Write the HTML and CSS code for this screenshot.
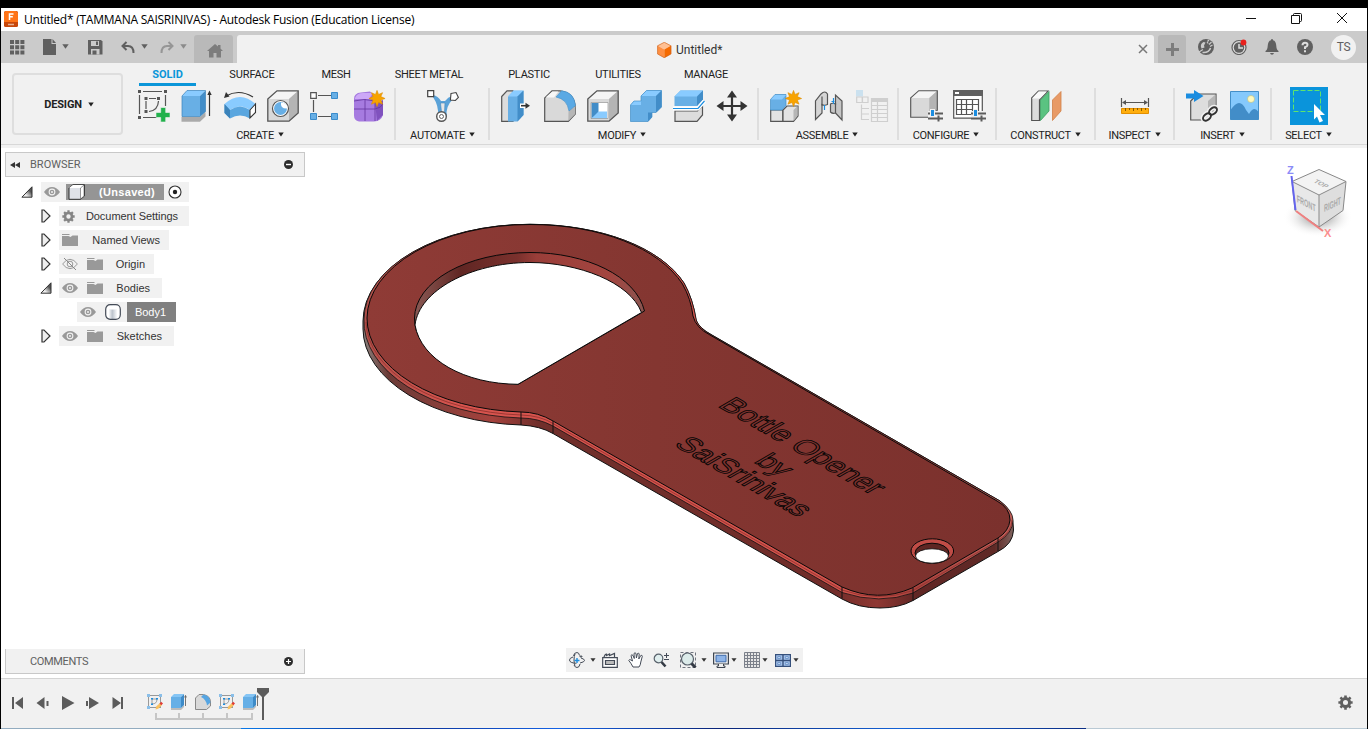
FILE: index.html
```html
<!DOCTYPE html>
<html lang="en">
<head>
<meta charset="utf-8">
<title>Untitled* - Autodesk Fusion</title>
<link rel="stylesheet" href="styles.css">
</head>
<body>
<svg class="defs" width="0" height="0">
  <defs>
    <linearGradient id="gFace" x1="0" y1="0" x2="1" y2="0"><stop offset="0" stop-color="#8f3b36"/><stop offset=".45" stop-color="#843631"/><stop offset="1" stop-color="#7b312d"/></linearGradient>
    <linearGradient id="gSide" gradientUnits="userSpaceOnUse" x1="362" y1="0" x2="1014" y2="0"><stop offset="0" stop-color="#8d8480"/><stop offset=".04" stop-color="#6b3b37"/><stop offset=".2" stop-color="#a5423d"/><stop offset=".27" stop-color="#702f2b"/><stop offset=".72" stop-color="#702c29"/><stop offset=".79" stop-color="#8f3833"/><stop offset=".85" stop-color="#602624"/><stop offset=".97" stop-color="#5f2926"/><stop offset="1" stop-color="#806560"/></linearGradient>
    <linearGradient id="gEdge" gradientUnits="userSpaceOnUse" x1="362" y1="0" x2="1014" y2="0"><stop offset="0" stop-color="#b0504a"/><stop offset=".15" stop-color="#d8544e"/><stop offset=".75" stop-color="#d0524b"/><stop offset=".85" stop-color="#a9423d"/><stop offset="1" stop-color="#c0605a"/></linearGradient>
    <linearGradient id="gWall" x1="0" y1="0" x2="1" y2="0"><stop offset="0" stop-color="#8a5a55"/><stop offset=".2" stop-color="#602623"/><stop offset=".45" stop-color="#7b312d"/><stop offset=".53" stop-color="#9a3e39"/><stop offset=".85" stop-color="#a34540"/><stop offset="1" stop-color="#8a5550"/></linearGradient>
    <linearGradient id="gTri" x1="0" y1="1" x2="1" y2="0"><stop offset=".3" stop-color="#eee"/><stop offset=".7" stop-color="#555"/></linearGradient>
    <linearGradient id="gCyl" x1="0" y1="0" x2="1" y2="0"><stop offset=".2" stop-color="#fff"/><stop offset=".45" stop-color="#bcc3cc"/><stop offset=".8" stop-color="#fff"/></linearGradient>
    <radialGradient id="gShadow"><stop offset=".3" stop-color="#bbb"/><stop offset="1" stop-color="#fff" stop-opacity="0"/></radialGradient>
    <symbol id="caret" viewBox="0 0 7 5"><path d="M.3.3h6.400L3.500 4.700z" fill="currentColor"/></symbol>
    <symbol id="eye" viewBox="0 0 16 12"><path d="M0 6Q3.500 .9 8 .9T16 6Q12.500 11.100 8 11.100T0 6z" fill="#999"/><circle cx="8" cy="6" r="3.400" fill="#f1f1f1"/><circle cx="8" cy="6" r="2.300" fill="#999"/><circle cx="8" cy="6" r="1" fill="#f1f1f1"/></symbol>
    <symbol id="folder" viewBox="0 0 16 12"><path d="M0 0h7.500v1H0zM0 2h6.500l2 1 2-1.500H16V12H0z" fill="#999"/></symbol>
    <symbol id="closed" viewBox="0 0 10 14"><path d="M1 1h2l6 6-6 6H1z" fill="#eee" stroke="#333" stroke-width="1.200"/></symbol>
    <symbol id="open" viewBox="0 0 12 12"><path d="M11 .8v10.400H.9z" fill="url(#gTri)" stroke="#333"/></symbol>
    <symbol id="gear" viewBox="0 0 16 16"><circle cx="8" cy="8" r="4.300" fill="none" stroke="currentColor" stroke-width="3.200"/><path d="M8 .4v3M8 12.600v3M.4 8h3M12.600 8h3M2.600 2.600l2 2M11.400 11.400l2 2M2.600 13.400l2-2M11.400 4.600l2-2" stroke="currentColor" stroke-width="2.800"/></symbol>
    <symbol id="tSketch" viewBox="0 0 16 16"><rect x="1.500" y="1.500" width="12" height="12" fill="none" stroke="#999"/><path d="M5 10V5h5q0 5-5 5" fill="none" stroke="#888" stroke-width=".8"/><path d="M0 0h3v3H0zM12 0h3v3h-3zM0 12h3v3H0z" fill="#8abfe9"/><path d="M4 4h2v1.500H4zM9 4h2v1.500H9zM4 9.500h2V11H4z" fill="#1b8de0"/><path d="M8.500 15.500l.7-3L13 9l2 2-3.800 3.800z" fill="#fbc15e"/><path d="M12.500 9.500l1.700-1.700L16 9.500l-1.700 1.700z" fill="#e13b35"/></symbol>
    <symbol id="tExtrude" viewBox="0 0 16 16"><path d="M0 14h10l3-3v2l-3 3H0z" fill="#bbb"/><path d="M0 3h10v11H0z" fill="#66afe6"/><path d="M0 3l3-3h10l-3 3z" fill="#85c5f5"/><path d="M10 3l3-3v11l-3 3z" fill="#3e8bc8"/><path d="M14.500 2v10M13.600 3.400l.9-2 .9 2" stroke="#666" stroke-width=".9" fill="none"/></symbol>
    <symbol id="tFillet" viewBox="0 0 16 16"><path d="M.5 15.500V4L4 .5h4.500Q15.500 2 15.500 8v4l-4 3.500z" fill="#d9d9d9" stroke="#888"/><path d="M6 3l2.500-2.500Q15 1.500 15.500 8.500l-3.500 3Q11 5 6 3z" fill="#56a5e2"/></symbol>
    <symbol id="cube" viewBox="0 0 32 32"><path d="M.8 9L10 .8h21.200V23L22 31.200H.8z" fill="#d9d9d9"/><path d="M.8 9L10 .8h21.200L22 9z" fill="#f5f5f5"/><path d="M31.200.8L22 9v22l9.200-8z" fill="#b4b4b4"/><path d="M.8 9L10 .8h21.200V23L22 31.200H.8z" fill="none" stroke="#555" stroke-width="1.300"/></symbol>
    <symbol id="sliders" viewBox="0 0 16 13"><path d="M1 2h15v11H1z" fill="#f1f1f1"/><path d="M1 4.500h15M1 9.500h15" stroke="#5c5c5c" stroke-width="2"/><path d="M11.500 6.500v6" stroke="#5c5c5c" stroke-width="2"/><path d="M3 0h5v7H3z" fill="#f1f1f1"/><path d="M4 1h3v6H4z" fill="#1b8de0"/></symbol>
    <symbol id="star" viewBox="0 0 18 18"><path d="M9 .4l1.700 4.300 4.200-1.900-1.800 4.200L17.600 9l-4.500 1.600 1.800 4.400-4.200-1.800L9 17.600l-1.600-4.400-4.300 1.800 1.700-4.400L.4 9l4.400-2-1.700-4.200 4.300 1.900z" fill="#f8a300" stroke="#dc8c00" stroke-width=".6"/></symbol>
  </defs>
</svg>

<div class="app">
  <header class="titlebar">
    <svg class="logo" width="15" height="16" viewBox="0 0 15 16"><rect width="14" height="16" rx="1.500" fill="#c8470a"/><path d="M1.500 0H12L14 2v9H0V2z" fill="#ff7417"/><path d="M5.500 9V3h4M5.500 5.800h3.300" stroke="#fff" stroke-width="1.500" fill="none"/><path d="M4 13.500h6" stroke="#e6b294" stroke-width="1.500"/></svg>
    <span class="app-title">Untitled* (TAMMANA SAISRINIVAS) - Autodesk Fusion (Education License)</span>
    <svg class="win" width="106" height="14" viewBox="0 0 106 14" fill="none" stroke="#111"><path d="M0 7.500h10"/><path d="M45.500 4.500h8v8h-8zM47.500 4.500v-1q0-1 1-1h6q1 0 1 1v6q0 1-1 1h-1"/><path d="M91 2l10 10M101 2L91 12"/></svg>
  </header>

  <div class="tabbar">
    <div class="quick">
      <svg class="q1" width="15" height="15" viewBox="0 0 15 15" fill="#606060"><path d="M0 0h4v4H0zM5.200 0h4v4h-4zM10.400 0h4v4h-4zM0 5.200h4v4H0zM5.200 5.200h4v4h-4zM10.400 5.200h4v4h-4zM0 10.400h4v4H0zM5.200 10.400h4v4h-4zM10.400 10.400h4v4h-4z"/></svg>
      <svg class="q2" width="14" height="16" viewBox="0 0 14 16" fill="#606060"><path d="M0 0h8.500v5H13v11H0z"/><path d="M9.500 0L13 4H9.500z"/></svg>
      <svg class="q3" width="7" height="5"><use href="#caret"/></svg>
      <svg class="q4" width="15" height="15" viewBox="0 0 15 15"><path d="M0 0h13l1.500 1.500V14.500H0z" fill="#606060"/><path d="M3 1h8v5H3zM3 9h8.500v5.500H3z" fill="#cbcbcb"/><path d="M8 1.500h2v3.500H8zM4.500 10.500h4v4h-4z" fill="#606060"/></svg>
      <svg class="q5" width="14" height="13" viewBox="0 0 14 13" fill="none" stroke="#606060" stroke-width="2"><path d="M5.500 1L1.500 5l4 4M1.500 5H7q5.500 0 5.500 7"/></svg>
      <svg class="q6" width="7" height="5"><use href="#caret"/></svg>
      <svg class="q7" width="14" height="13" viewBox="0 0 14 13" fill="none" stroke="#969696" stroke-width="2"><path d="M8.500 1l4 4-4 4M12.500 5H7Q1.500 5 1.500 12"/></svg>
      <svg class="q8" width="7" height="5"><use href="#caret"/></svg>
    </div>
    <div class="home"><svg width="16" height="14" viewBox="0 0 16 14" fill="#7d7d7d"><path d="M8 0l3 2.500V1h2.500v3.500L16 7h-2v6.500H9.500V9h-3v4.500H2V7H0z"/></svg></div>
    <div class="doc">
      <svg width="15" height="16" viewBox="0 0 15 16"><path d="M7.300 0l6.900 3.600-6.900 4L.4 3.600z" fill="#ffc093"/><path d="M.4 3.600l6.900 4V16L.4 12z" fill="#ff8f42"/><path d="M14.200 3.600l-6.900 4V16l6.900-4z" fill="#f56a00"/><path d="M7.300.3l6.600 3.500V12l-6.600 3.700L.6 12V3.800z" fill="none" stroke="#c96320" stroke-width=".6"/></svg>
      <span>Untitled*</span>
      <svg class="close" width="10" height="10" viewBox="0 0 10 10" stroke="#777" stroke-width="1.500"><path d="M1 1l8 8M9 1L1 9"/></svg>
    </div>
    <div class="plus"><svg width="13" height="13" viewBox="0 0 13 13" stroke="#7d7d7d" stroke-width="3"><path d="M6.500 0v13M0 6.500h13"/></svg></div>
    <div class="status">
      <svg width="16" height="16" viewBox="0 0 16 16"><circle cx="8" cy="8" r="8" fill="#606060"/><path d="M3.500 9.500Q1.500 5 5.500 3l2 .5L6 6.500l.5 2z" fill="#cbcbcb"/><path d="M9 3l1.200 1.500M11 5.500l2.500-2.500M12 7.500l2.500-1.500M9.500 2.500l1.500-1.500" stroke="#cbcbcb" stroke-width="1.200"/><path d="M4.500 13.500Q11 14 12.500 9" fill="none" stroke="#cbcbcb" stroke-width="1.600"/><path d="M1 13l4-2.500" stroke="#cbcbcb" stroke-width="1.200"/></svg>
      <svg width="16" height="16" viewBox="0 0 16 16"><circle cx="8" cy="8.500" r="7" fill="#ddd" stroke="#606060" stroke-width="1.200"/><circle cx="8" cy="8.500" r="5.200" fill="#606060"/><path d="M8 5v4h4" stroke="#ddd" fill="none" stroke-width="1.500"/><circle cx="12.500" cy="3.500" r="2.900" fill="#e8211d"/></svg>
      <svg width="16" height="16" viewBox="0 0 16 16" fill="#606060"><path d="M8 0q1 0 1 1.300Q12 2 12.300 7q.2 4 2.200 5v1h-13v-1q2-1 2.200-5Q4 2 7 1.300 7 0 8 0zM6 14h4q-.5 1.800-2 1.800T6 14z"/></svg>
      <svg width="16" height="16" viewBox="0 0 16 16"><circle cx="8" cy="8" r="8" fill="#606060"/><path d="M5.500 6.300Q5.500 3.800 8 3.800t2.500 2.200Q10.500 7.400 8 8.300V10" fill="none" stroke="#ddd" stroke-width="2"/><path d="M7 11.300h2v2H7z" fill="#ddd"/></svg>
      <span class="avatar">TS</span>
    </div>
  </div>

  <div class="ribbon">
    <div class="workspace">DESIGN <svg width="6" height="5"><use href="#caret"/></svg></div>
    <div class="toolarea">
      <nav class="modes"><b>SOLID</b><span>SURFACE</span><span>MESH</span><span>SHEET METAL</span><span>PLASTIC</span><span>UTILITIES</span><span>MANAGE</span></nav>
      <div class="groups">
        <section class="g-create">
          <div class="icons">
            <svg width="32" height="32" viewBox="0 0 32 32"><path d="M5 1.500h19M5 27.500h14M1.500 5v19M27.500 5v11M8 19V11M11 8.500h7" fill="none" stroke="#555" stroke-width="1.200"/><path d="M20.500 11Q20 20.500 11 21.500" fill="none" stroke="#555" stroke-width="1.200"/><path d="M0 0h3v3H0zM26 0h3v3h-3zM0 26h3v3H0zM6.500 7h3v3h-3zM19 7h3v3h-3zM6.500 20h3v3h-3z" fill="#555"/><path d="M22.700 17.500h5v5H32v5h-4.300V32h-5v-4.500H18v-5h4.700z" fill="#22b14c" stroke="#f1f1f1" stroke-width=".6"/></svg>
            <svg width="32" height="32" viewBox="0 0 32 32"><path d="M.5 27H19l5.500-5v4.500L19 31.700H.5z" fill="#aaa"/><path d="M1 6h18v20.500H1z" fill="#68afe5"/><path d="M1 6l5-5.500h18.500L19 6z" fill="#89cbff"/><path d="M19 6l5.500-5.500v21L19 26.500z" fill="#428dc8"/><path d="M1 6l5-5.500h18.500v21l-5.500 5H1z" fill="none" stroke="#3b83ba" stroke-width=".7"/><path d="M28.500 26V3" stroke="#333" stroke-width="1.200"/><path d="M26.300 5L28.500.5l2.200 4.500z" fill="#333"/></svg>
            <svg width="32" height="32" viewBox="0 0 32 32"><path d="M2 6Q15-1.500 29 7" fill="none" stroke="#333" stroke-width="1.200"/><path d="M0 8l2-6 3.500 4.500z" fill="#333"/><path d="M.5 14Q16 0 31.500 14L26 20q-9-7-20 0z" fill="#89cbff"/><path d="M.5 14L6 20q10-7 20 0v8.500q-10-6-20 0L.5 23z" fill="#5aa6df"/><path d="M.5 14L6 20v8.500L.5 23z" fill="#3b83ba"/><path d="M26 20l5.500-6v8.500L26 28z" fill="#fff" stroke="#333" stroke-width="1.100"/></svg>
            <svg width="32" height="32" viewBox="0 0 32 32"><use href="#cube"/><circle cx="13.500" cy="18.500" r="8" fill="#fff" stroke="#555" stroke-width="1.200"/><circle cx="13.500" cy="18.500" r="6.500" fill="#68afe5"/><path d="M14 12.500q-1 6.500 6.500 6Q20 13 14 12.500z" fill="#fff"/></svg>
            <svg width="32" height="32" viewBox="0 0 32 32"><path d="M8 5.500h13M8 26.500h13M3.500 10v12" stroke="#555" stroke-width="1.200"/><path d="M.7 2.700h5.600v5.600H.7z" fill="#fff" stroke="#555" stroke-width="1.200"/><path d="M21.500 2.500h6v6h-6zM.5 23.500h6v6h-6zM21.500 23.500h6v6h-6z" fill="#68afe5" stroke="#3b8ccc"/></svg>
            <svg width="32" height="32" viewBox="0 0 32 32"><path d="M1 9q0-6 7-6.500l9-1L30 14v11q-2 6-9 6.500H6q-5-1-5-6z" fill="#a67be0"/><path d="M2 8q2-5 8-5h10l-4 6H2z" fill="#cda8f7"/><path d="M22 13l8-3v15l-6 6z" fill="#8052be"/><path d="M1 19h21q6-1 8-5M12 9v22M1 11q10-3 21 0v20" fill="none" stroke="#65369f" stroke-width=".8"/><use href="#star" x="15.500" y="0" width="17" height="17"/></svg>
          </div>
          <div class="label">CREATE <svg width="6" height="5"><use href="#caret"/></svg></div>
        </section>
        <section class="g-automate">
          <div class="icons"><svg width="32" height="32" viewBox="0 0 32 32"><path d="M6 5q5 1 8 6h4q3-4 7-5L26 9q-8 8-6 17h-9Q12 16 6 7z" fill="#5aa2d8"/><path d="M13.500 13h4.500l-.5 9h-3z" fill="#e6e6e6" stroke="#3f86bd" stroke-width=".6"/><path d="M.7.7h6v6h-6z" fill="#fff" stroke="#444" stroke-width="1.200"/><path d="M24 3.500l5-1 2.400 5-3 3-5-.5z" fill="#fff" stroke="#444" stroke-width="1.100"/><circle cx="14.500" cy="26.500" r="4.800" fill="#fff" stroke="#555" stroke-width="1.400"/><circle cx="14.500" cy="26.500" r="2" fill="none" stroke="#666"/></svg></div>
          <div class="label">AUTOMATE <svg width="6" height="5"><use href="#caret"/></svg></div>
        </section>
        <section class="g-modify">
          <div class="icons">
            <svg width="32" height="32" viewBox="0 0 32 32"><path d="M.7 6.500L6 .8h6v30.500H.7z" fill="#ddd" stroke="#555" stroke-width="1.200"/><path d="M7 6.500L12.500.8h10V25l-6 6.500H7z" fill="#68afe5"/><path d="M7 6.500L12.500.5h10l-6 6z" fill="#89cbff"/><path d="M16.500 6.500l6-6V25l-6 6.500z" fill="#428dc8"/><path d="M19 13.500h6v4.500h-6z" fill="#fff"/><path d="M20 15.700h5" stroke="#333" stroke-width="1.600"/><path d="M24.500 12.700l4.500 3-4.500 3z" fill="#333"/></svg>
            <svg width="32" height="32" viewBox="0 0 32 32"><path d="M.7 31.300V8L8 .8h8Q31 3 31.300 18v6l-7 7.300z" fill="#d9d9d9" stroke="#555" stroke-width="1.200"/><path d="M1.500 7.500l6.800-6h6L10 7.500z" fill="#f7f7f7"/><path d="M24.500 21l6.800-5v8l-7 7z" fill="#b6b6b6"/><path d="M12 7L17.500.8Q30 2 31.500 15.500L25 21Q23 9 12 7z" fill="#5aa9e4" stroke="#438fc8" stroke-width=".6"/></svg>
            <svg width="32" height="32" viewBox="0 0 32 32"><use href="#cube"/><path d="M4 12.500h17v16H4z" fill="#fff"/><path d="M4.500 13h7v10l-7 5.500z" fill="#428dc8"/><path d="M4.500 28.500l7-7H20v7z" fill="#89cbff"/><path d="M4 12.500h17v16H4z" fill="none" stroke="#888" stroke-width=".6"/></svg>
            <svg width="32" height="32" viewBox="0 0 32 32"><path d="M.5 15l3.500-4h7V6l5.500-5.500h15V17L26 22.500h-4V27l-4 4.500H.5z" fill="#68afe5"/><path d="M11 6L16.500.5h15L26 6zM.5 15L4 11h7v4z" fill="#89cbff"/><path d="M26 6l5.500-5.500V17L26 22.500zM18 22.500h4V27l-4 4.500z" fill="#428dc8"/><path d="M.5 15l3.500-4h7V6l5.500-5.500h15V17L26 22.500h-4V27l-4 4.500H.5z" fill="none" stroke="#438fc8" stroke-width=".7"/></svg>
            <svg width="32" height="32" viewBox="0 0 32 32"><path d="M1.500 6.500L7.500.5h22.500v9l-6 6.500H1.500z" fill="#68afe5"/><path d="M1.500 6.500L7.500.5h22.500l-6 6z" fill="#89cbff"/><path d="M24 6.500l6-6v9l-6 6.500z" fill="#428dc8"/><path d="M2 21h22.500l5-5v9L24 31.300H2z" fill="#ddd" stroke="#555" stroke-width="1.200"/><path d="M0 18.500h25l6.500-7.500" stroke="#fff" stroke-width="4" fill="none"/><path d="M0 18.500h25l6.500-7.500" stroke="#1b8de0" stroke-width="1.200" fill="none"/></svg>
            <svg width="32" height="32" viewBox="0 0 32 32"><path d="M16 4v24M4 16h24" stroke="#333" stroke-width="2.200"/><path d="M16 .5l5 7H11zM16 31.500l5-7H11zM.5 16l7-5v10zM31.500 16l-7-5v10z" fill="#333"/></svg>
          </div>
          <div class="label">MODIFY <svg width="6" height="5"><use href="#caret"/></svg></div>
        </section>
        <section class="g-assemble">
          <div class="icons">
            <svg width="32" height="32" viewBox="0 0 32 32"><path d="M.7 20h12v11.300H.7zM13 20l4-4h11v10l-4.500 5.300H13z" fill="#e3e3e3" stroke="#555" stroke-width="1.200"/><path d="M23.500 20l4-4v10l-4 5z" fill="#b6b6b6"/><path d="M.5 9.500L5 4.500h11v11L12 20H.5z" fill="#68afe5" stroke="#438fc8" stroke-width=".7"/><path d="M1 9.500L5 5h11l-4 4.500z" fill="#89cbff"/><use href="#star" x="15" y="0" width="17" height="17"/></svg>
            <svg width="32" height="32" viewBox="0 0 32 32" stroke="#555" stroke-width="1.200"><path d="M2.500 29.500V11L8 4q4-4 6.500 0v10.500q-3 1.500-5.500 0V23z" fill="#d5d5d5"/><path d="M9 6.500v9" fill="none"/><path d="M29 30V11L22.500 5v9q-3-1.500-5 0v8q2 2 5 1z" fill="#c6c6c6"/><path d="M22.500 13v10" fill="none"/><path d="M11.500 15v5M20.500 8v6M18.500 11.500h3" stroke="#1b8de0"/></svg>
            <svg width="32" height="32" viewBox="0 0 32 32" fill="none" stroke="#cfcfcf" stroke-width="1.200"><path d="M0 0h7v6.500H0z" fill="#cbe1ef" stroke="none"/><path d="M.7 7h5.500v5.500H.7zM6.500 7H12v5.500H6.500zM5.500 14.500v15.500M5.500 18.500H13M5.500 24H13M5.500 29.500H13M15.500 8.500h16v23h-16zM15.500 15.500h16M15.500 19.500h16M15.500 23.500h16M15.500 27.500h16M21.500 12v19"/><path d="M15 8h17v4H15z" fill="#cfcfcf" stroke="none"/></svg>
          </div>
          <div class="label">ASSEMBLE <svg width="6" height="5"><use href="#caret"/></svg></div>
        </section>
        <section class="g-configure">
          <div class="icons">
            <svg width="32" height="32" viewBox="0 0 32 32"><use href="#cube" width="28" height="28"/><use href="#sliders" x="17" y="19" width="16" height="13"/></svg>
            <svg width="32" height="32" viewBox="0 0 32 32"><path d="M.7 1.700h28.600v26.500H.7z" fill="#fff" stroke="#555" stroke-width="1.200"/><path d="M0 0h30v6H0z" fill="#606060"/><path d="M2 2h4v2H2z" fill="#fff"/><path d="M3.500 9.500h22v15h-22zM3.500 14.500h22M3.500 19.500h22M8.500 9.500v15M13.500 9.500v15M19.500 9.500v15" fill="none" stroke="#555" stroke-width="1.200"/><use href="#sliders" x="17" y="19" width="16" height="13"/></svg>
          </div>
          <div class="label">CONFIGURE <svg width="6" height="5"><use href="#caret"/></svg></div>
        </section>
        <section class="g-construct">
          <div class="icons"><svg width="32" height="32" viewBox="0 0 32 32"><path d="M1.700 8L8.500 1H18L9.500 10v20.500H1.700z" fill="#ddd" stroke="#555" stroke-width="1.200"/><path d="M2 8.500L8.500 1.500H17l-7 7z" fill="#fafafa"/><path d="M10.500 10l8.500-8.500V21l-8.500 9.500z" fill="#5ac381" stroke="#3a9d60" stroke-width=".8"/><path d="M22.500 10L31 1.500V21l-8.500 9.500z" fill="#e89a66" stroke="#d28048" stroke-width=".8"/></svg></div>
          <div class="label">CONSTRUCT <svg width="6" height="5"><use href="#caret"/></svg></div>
        </section>
        <section class="g-inspect">
          <div class="icons"><svg width="32" height="32" viewBox="0 0 32 32"><path d="M2.500 8v9M29.500 8v9M4 12.500h24" stroke="#555" stroke-width="1.200"/><path d="M3 12.500l4-2.500v5zM29 12.500l-4-2.500v5z" fill="#555"/><path d="M2.500 18.500h27v5h-27z" fill="#ffae0d" stroke="#e38f00"/><path d="M6.500 18v3M10.500 18v2M14.500 18v3M18.500 18v2M22.500 18v3M26.500 18v2" stroke="#8c5b00"/></svg></div>
          <div class="label">INSPECT <svg width="6" height="5"><use href="#caret"/></svg></div>
        </section>
        <section class="g-insert">
          <div class="icons">
            <svg width="32" height="32" viewBox="0 0 32 32"><path d="M4.700 11l7-7H30v19l-8 7H4.700z" fill="#ddd" stroke="#555" stroke-width="1.200"/><path d="M22 11l7.500-6.500V23L22 29.500z" fill="#b6b6b6"/><path d="M0 3.500h8V0l9.500 6L8 12V8.500H0z" fill="#1b8de0"/><g fill="none" stroke="#f1f1f1" stroke-width="5"><ellipse cx="21" cy="27" rx="4.500" ry="3" transform="rotate(-40 21 27)"/><ellipse cx="27" cy="21" rx="4.500" ry="3" transform="rotate(-40 27 21)"/></g><g fill="none" stroke="#333" stroke-width="2"><ellipse cx="21" cy="27" rx="4.500" ry="3" transform="rotate(-40 21 27)"/><ellipse cx="27" cy="21" rx="4.500" ry="3" transform="rotate(-40 27 21)"/></g></svg>
            <svg width="32" height="32" viewBox="0 0 32 32"><path d="M1.500 1.500h28v28h-28z" fill="#85c9fc" stroke="#438fc8"/><path d="M1.500 20q5-7 8.500-7 4 0 7 7l3 4q5-9 9.500-2v7.500h-28z" fill="#428dc8"/><circle cx="22" cy="9" r="3.500" fill="#fff9bd" stroke="#b5bb80" stroke-width=".6"/></svg>
          </div>
          <div class="label">INSERT <svg width="6" height="5"><use href="#caret"/></svg></div>
        </section>
        <section class="g-select">
          <div class="icons"><svg width="38" height="38" viewBox="0 0 38 38"><path d="M0 0h38v38H0z" fill="#0a94db"/><path d="M3.500 3.500h27v21h-27z" fill="none" stroke="#5fe46c" stroke-dasharray="5 2"/><path d="M24 17l11 11h-5l3 6-3.500 1.500-2.500-6-3 3z" fill="#fff"/></svg></div>
          <div class="label">SELECT <svg width="6" height="5"><use href="#caret"/></svg></div>
        </section>
      </div>
    </div>
  </div>

  <main class="viewport">
    <svg class="scene" width="1366" height="530" viewBox="1 148 1366 530">
      <!-- side walls -->
      <path d="M363 321A167 97 0 0 1 530 224.300C602 224.500 661 248 684 283Q693 299 696 320Q699 328 712 335L1000 501Q1014 511 1013.500 530Q1013 544 998 551.500L913 600.500Q899 608 880 608Q858 608 842 599L553 433.500Q540 426 521 425A167 96.500 0 0 1 363 329z" fill="url(#gSide)" stroke="#111"/>
      <!-- rounded edge -->
      <path d="M364 319A166 95 0 0 1 530 224.300C602 224.500 661 248 684 283Q693 299 696.500 321Q700 329 711.500 335L1000 501Q1013 511 1013 520Q1013 533 998 542L913 593Q880 605 842 592.500L553 426Q538 418 521 418A167 96.500 0 0 1 364 319z" fill="url(#gEdge)" stroke="#111" stroke-width=".8"/>
      <path d="M366 322A165 95 0 0 0 521 415Q540 415.500 553 423.500L842 590Q878 603 913 590.500L998 540.500Q1012 532 1012 520" fill="none" stroke="#8c302c" stroke-width=".8"/>
      <!-- top face -->
      <path d="M367 318A163 94 0 0 1 530 224.500C600 224.500 659 248 682.500 284Q691 299 693 316Q696 328 710 335L997 501Q1010 508 1010 520Q1009 531 998 538L912 588Q878 603 842 587L553 421Q538 412 521 412A163 94 0 0 1 367 318z" fill="url(#gFace)" stroke="#080808"/>
      <!-- opening -->
      <path d="M644.500 311C636 276 586 252.500 530 252.500A115.500 66 0 0 0 414.500 318A115.500 66 0 0 0 518 384.300z" fill="url(#gWall)" stroke="#080808"/>
      <path d="M641.500 312.500C630 282 578 262.500 530 262.500C470 262.500 419 291 415 325C421 360 465 384 518 384.300z" fill="#fff" stroke="#080808"/>
      <path d="M521 412v13M553 421v12.500M842 587v11.500M913 588v12.500M998 538v13" stroke="#111"/>
      <!-- key ring hole -->
      <ellipse cx="932.300" cy="551" rx="21.300" ry="12.200" fill="#c04c46" stroke="#080808"/>
      <ellipse cx="932" cy="553" rx="17" ry="9.800" fill="#5e2623" stroke="#080808"/>
      <ellipse cx="932" cy="556" rx="16.500" ry="7.200" fill="#fff" stroke="#080808" stroke-width=".8"/>
      <g class="engraving">
        <text transform="matrix(.866 .5 -.866 .5 717 406)">Bottle Opener</text>
        <text transform="matrix(.866 .5 -.866 .5 753 462)">by</text>
        <text transform="matrix(.866 .5 -.866 .5 673 445)">SaiSrinivas</text>
      </g>
      <!-- view cube -->
      <ellipse cx="1318" cy="217" rx="35" ry="20" fill="url(#gShadow)"/>
      <path d="M1319 169.500l27 12-27 13.500-27-13.500z" fill="#f3f3f3"/><path d="M1292 181.500l27 13.500v32l-24-16.500z" fill="#e8e8e8"/><path d="M1346 181.500l-27 13.500v32l24-16.500z" fill="#dedede"/>
      <path d="M1319 169.500l27 12-27 13.500-27-13.500zM1292 181.500l3 29 24 16.500 24-16.500 3-29M1319 195v32" fill="none" stroke="#888"/>
      <path d="M1291.500 176l4 34" stroke="#6464ee" stroke-width="2"/><path d="M1296 211l27 20" stroke="#f08080" stroke-width="2"/>
      <text class="axis" x="1287" y="174" fill="#8b8bf7">Z</text><text class="axis" x="1324" y="237" fill="#fb8e8e">X</text>
      <text class="cubetext" transform="matrix(.78 .38 -.7 .5 1313 182)">TOP</text>
      <text class="cubetext" transform="matrix(.68 .36 .06 1.300 1297 202)">FRONT</text>
      <text class="cubetext" transform="matrix(.68 -.32 0 1.300 1324 212)">RIGHT</text>
    </svg>

    <aside class="browser">
      <div class="panel-head"><svg width="10" height="6" viewBox="0 0 10 6"><path d="M5 0v6L0 3zM10 0v6L5 3z" fill="#333"/></svg><span>BROWSER</span><svg class="toggle" width="9" height="9" viewBox="0 0 9 9"><circle cx="4.500" cy="4.500" r="4.500" fill="#2d2d2d"/><path d="M2 4.500h5" stroke="#fff" stroke-width="1.400"/></svg></div>
      <ul class="tree">
        <li class="root"><svg class="tw" width="12" height="12"><use href="#open"/></svg><div class="row w148"><svg width="16" height="12"><use href="#eye"/></svg><div class="docname"><svg width="18" height="16" viewBox="0 0 18 16"><path d="M1 4L5 .7h11.500V12L12.500 15.300H1z" fill="#dfe2e8" stroke="#333"/><path d="M1 4L5 1h11l-3.500 3z" fill="#fff"/><path d="M12.500 4l3.500-3v11l-3.500 3z" fill="#fff" stroke="#555" stroke-width=".6"/></svg><b>(Unsaved)</b></div><svg width="14" height="14" viewBox="0 0 14 14"><circle cx="7" cy="7" r="6" fill="#fff" stroke="#333" stroke-width="1.100"/><circle cx="7" cy="7" r="2.200" fill="#222"/></svg></div></li>
        <li><svg class="tw" width="10" height="14"><use href="#closed"/></svg><div class="row w130"><svg class="cog" width="13" height="13"><use href="#gear"/></svg><span>Document Settings</span></div></li>
        <li><svg class="tw" width="10" height="14"><use href="#closed"/></svg><div class="row w110"><svg width="16" height="12"><use href="#folder"/></svg><span>Named Views</span></div></li>
        <li><svg class="tw" width="10" height="14"><use href="#closed"/></svg><div class="row w95"><svg width="16" height="12" viewBox="0 0 16 12"><path d="M.6 6Q4 1.300 8 1.300T15.400 6Q12 10.700 8 10.700T.6 6z" fill="none" stroke="#999"/><circle cx="8" cy="6" r="2.800" fill="none" stroke="#999"/><path d="M2 0l12 12" stroke="#888"/></svg><svg class="f2" width="16" height="12"><use href="#folder"/></svg><span>Origin</span></div></li>
        <li><svg class="tw" width="12" height="12"><use href="#open"/></svg><div class="row w103"><svg width="16" height="12"><use href="#eye"/></svg><svg class="f2" width="16" height="12"><use href="#folder"/></svg><span>Bodies</span></div></li>
        <li class="leaf"><div class="row w99"><svg width="16" height="12"><use href="#eye"/></svg><svg class="f2" width="16" height="16" viewBox="0 0 16 16"><rect x=".7" y=".7" width="14.600" height="14.600" rx="4.500" fill="url(#gCyl)" stroke="#444b57" stroke-width="1.200"/><ellipse cx="8" cy="3.500" rx="5.500" ry="2" fill="#fff"/></svg><strong>Body1</strong></div></li>
        <li><svg class="tw" width="10" height="14"><use href="#closed"/></svg><div class="row w115"><svg width="16" height="12"><use href="#eye"/></svg><svg class="f2" width="16" height="12"><use href="#folder"/></svg><span>Sketches</span></div></li>
      </ul>
    </aside>

    <div class="comments panel-head"><span>COMMENTS</span><svg class="toggle" width="9" height="9" viewBox="0 0 9 9"><circle cx="4.500" cy="4.500" r="4.500" fill="#2d2d2d"/><path d="M2 4.500h5M4.500 2v5" stroke="#fff" stroke-width="1.200"/></svg></div>

    <div class="navbar">
      <svg class="n1" width="16" height="16" viewBox="0 0 16 16" fill="none" stroke="#444b57"><path d="M4.500 4Q5 .5 8 .5q2 0 2.500 3M5 13q1 2.500 3 2.500 2.500 0 3-3.500M4 5Q.5 6 .5 8q0 3 7 3.300M12 6q3.500 1 3.500 2.500T11 11M6 2Q5 4 5 8t1 5.500"/><path d="M8 6v5M5.500 8.500h5" stroke="#1b8de0" stroke-width="1.400"/><path d="M12 3v3M10.500 4.500h3" stroke-width=".8"/></svg>
      <svg class="c1" width="6" height="4"><use href="#caret"/></svg>
      <svg class="n2" width="16" height="16" viewBox="0 0 16 16" fill="none" stroke="#444b57" stroke-width="1.200"><path d="M.7 5.700h14.600v9.600H.7z" fill="#fff"/><path d="M3.500 8.500h9v4h-9z" fill="#bbb"/><path d="M2 5q1-3 2.500-3v1.500l3-1.500v1.500l5-2V5"/></svg>
      <svg class="n3" width="16" height="16" viewBox="0 0 16 16"><path d="M5 15Q3 11 .8 8.500q.4-1.500 2-.6L4.500 9 3 3.500q.8-1.500 2 0L6.300 6.500 6 1.500q1-1.500 2 0L8.400 6 9.500 1.500q1.300-1 1.700.5L10.800 7l2-3.500q1.300-.8 1.500.8L12.800 10q-.2 3-1.800 5z" fill="#fff" stroke="#444b57"/></svg>
      <svg class="n4" width="17" height="16" viewBox="0 0 17 16" fill="none"><circle cx="5.500" cy="6.500" r="4.300" fill="#e0eeee" stroke="#58616b" stroke-width="1.200"/><path d="M8.500 10l4 4.500" stroke="#333a44" stroke-width="2.600"/><path d="M13.500 1v5M11 3.500h5M11 7.500h5" stroke="#444b57"/></svg>
      <svg class="n5" width="17" height="16" viewBox="0 0 17 16" fill="none"><path d="M.5.500h15v15H.5z" stroke="#70757f" stroke-dasharray="3 2"/><circle cx="7.500" cy="7" r="6" fill="#dcebea" stroke="#58616b" stroke-width="1.200"/><path d="M11.500 11.500l4 4" stroke="#333a44" stroke-width="3"/></svg>
      <svg class="c2" width="6" height="4"><use href="#caret"/></svg>
      <svg class="n6" width="16" height="16" viewBox="0 0 16 16"><path d="M.6 1h14.800v11H.6z" fill="#eee" stroke="#3f4651" stroke-width="1.200"/><path d="M3 3.300h10v6.500H3z" fill="#8db4e8" stroke="#3f6bab"/><path d="M5.500 12v2H4v1.500h8V14h-1.500v-2" fill="#eee" stroke="#3f4651"/></svg>
      <svg class="c3" width="6" height="4"><use href="#caret"/></svg>
      <svg class="n7" width="16" height="16" viewBox="0 0 16 16" fill="#e6e6e6" stroke="#7b808a"><path d="M.5.500h15v15H.5zM3.500 0v16M6.500 0v16M9.500 0v16M12.500 0v16M0 3.500h16M0 6.500h16M0 9.500h16M0 12.500h16"/></svg>
      <svg class="c3" width="6" height="4"><use href="#caret"/></svg>
      <svg class="n8" width="16" height="13" viewBox="0 0 16 13"><path d="M.6.600h14.800v11.800H.6z" fill="#a9c6ee" stroke="#35507c" stroke-width="1.200"/><path d="M8 0v13M0 6.500h16" stroke="#35507c" stroke-width="1.400"/><path d="M2.700 2.600h3v2h-3zM10.300 2.600h3v2h-3zM2.700 8.600h3v2h-3zM10.300 8.600h3v2h-3z" fill="#c7dbf6" stroke="#6f95c9"/></svg>
      <svg class="c3" width="6" height="4"><use href="#caret"/></svg>
    </div>
  </main>

  <footer class="timeline">
    <svg class="play" width="112" height="14" viewBox="0 0 112 14" fill="#5c5c5c"><path d="M0 1h2v12H0zM11 1v12L3 7zM32.500 1v12L24.500 7zM34.500 5h2v5h-2zM50 0l12.500 7L50 14zM74 5h2v5h-2zM77 1v12l10-6zM100.500 1v12L109 7zM109 1h2v12h-2z"/></svg>
    <div class="features">
      <div class="ops">
        <svg width="16" height="16"><use href="#tSketch"/></svg><svg width="16" height="16"><use href="#tExtrude"/></svg><svg width="16" height="16"><use href="#tFillet"/></svg><svg width="16" height="16"><use href="#tSketch"/></svg><svg width="16" height="16"><use href="#tExtrude"/></svg>
      </div>
      <svg class="bracket" width="98" height="7" viewBox="0 0 98 7" fill="none" stroke="#c6c6c6" stroke-width="2"><path d="M1 0v6h96V0M24 0v6M48 0v6M72 0v6"/></svg>
    </div>
    <svg class="marker" width="12" height="32" viewBox="0 0 12 32" fill="#5c5c5c"><path d="M0 0h12v4L7 9v23H5V9L0 4z"/></svg>
    <svg class="settings" width="15" height="15"><use href="#gear"/></svg>
  </footer>
  <div class="taskbar"></div>
</div>
</body>
</html>
```
FILE: styles.css
```css
* { box-sizing: border-box; }
body { margin: 0; background: #000; overflow: hidden; font-family: "Liberation Sans", Arial, sans-serif; font-size: 11px; color: #333; }
svg { display: block; flex: none; }
.defs { position: absolute; }
.app { width: 1368px; height: 729px; display: flex; flex-direction: column; border: 1px solid #000; border-top-width: 8px; border-bottom: 0; background: #f1f1f1; }

.titlebar { height: 23px; display: flex; align-items: center; background: #fff; padding: 0 15px 0 3px; }
.logo { margin-bottom: 2px; }
.app-title { margin-left: 5px; flex: 1; font: 12px/20px "Open Sans", sans-serif; letter-spacing: -.235px; color: #000; white-space: nowrap; }
.win { margin-bottom: 4px; }

.tabbar { height: 32px; display: flex; align-items: flex-end; background: #cbcbcb; color: #606060; }
.quick { width: 193px; height: 32px; display: flex; align-items: center; padding-left: 9px; }
.q2 { margin-left: 18px; }
.q3 { margin: 0 0 2px 5px; }
.q4 { margin-left: 19px; }
.q5 { margin: 1px 0 0 18px; }
.q6 { margin: 0 0 2px 6px; }
.q7 { margin: 1px 0 0 12px; }
.q8 { margin: 0 0 2px 6px; color: #8b8b8b; }
.home { width: 39px; height: 28px; display: grid; place-items: center; padding: 3px 0 0 2px; background: #b9b9b9; border-radius: 3px 3px 0 0; }
.doc { width: 917px; height: 28px; margin-left: 4px; display: flex; align-items: center; padding: 1px 6px 0 420px; background: #f1f1f1; border-radius: 3px 3px 0 0; font: 12px/20px Roboto, sans-serif; color: #333; }
.doc span { margin-left: 4px; flex: 1; }
.close { margin-bottom: 2px; }
.plus { width: 28px; height: 28px; margin-left: 4px; display: grid; place-items: center; background: #b9b9b9; border-radius: 3px 3px 0 0; }
.status { flex: 1; height: 32px; display: flex; align-items: center; gap: 17px; padding-left: 12px; }
.avatar { width: 25px; height: 25px; margin-left: 1px; border-radius: 50%; background: #f1f1f1; display: grid; place-items: center; font: 12px Roboto, sans-serif; letter-spacing: -.4px; color: #606060; }

.ribbon { height: 85px; display: flex; border-bottom: 3px solid #f1f1f1; box-shadow: inset 0 -1px #d8d8d8; }
.workspace { width: 111px; height: 62px; margin: 10px 6px 0 11px; border: 2px solid #dedede; border-radius: 4px; display: flex; align-items: center; justify-content: center; gap: 6px; padding-left: 3px; font: bold 11px Roboto, sans-serif; letter-spacing: -.15px; color: #222; }
.toolarea { flex: 1; }
.modes { display: flex; height: 24px; padding-left: 10px; font: 11px/23px Roboto, sans-serif; letter-spacing: -.25px; text-align: center; color: #222; }
.modes b { width: 57px; height: 23px; color: #0b96d9; border-bottom: 3px solid #0b96d9; letter-spacing: 0; }
.modes span:nth-child(2) { width: 112px; letter-spacing: -.1px; }
.modes span:nth-child(3) { width: 56px; }
.modes span:nth-child(4) { width: 130px; }
.modes span:nth-child(5) { width: 70px; }
.modes span:nth-child(6) { width: 108px; }
.modes span:nth-child(7) { width: 68px; }
.groups { display: flex; margin-top: 1px; height: 52px; }
.groups section { border-right: 2px solid #dedede; height: 52px; }
.icons { display: flex; justify-content: center; align-items: center; gap: 11px; height: 35px; }
.icons svg { overflow: visible; }
.label { display: flex; justify-content: center; align-items: center; gap: 4px; margin-top: 1px; font: 11px/24px Roboto, sans-serif; letter-spacing: -.3px; color: #222; }
.label svg { margin-bottom: 3px; }
.g-create { width: 267px; }
.g-automate { width: 94px; padding-left: 1px; }
.g-modify { width: 269px; }
.g-modify .icons { padding-left: 1px; }
.g-modify .label, .g-create .label { padding-right: 3px; }
.g-assemble { width: 140px; }
.g-assemble .icons { padding-left: 1px; }
.g-assemble .label { padding-right: 2px; }
.g-configure { width: 98px; }
.g-configure .label { padding-right: 2px; }
.g-construct { width: 99px; }
.g-inspect { width: 79px; }
.g-insert { width: 97px; }
.g-insert .icons { padding-left: 1px; }
.g-select { width: 73px; }
.groups .g-select { border: 0; }

.viewport { position: relative; height: 530px; background: #fff; }
.scene { position: absolute; inset: 0; }
.engraving text { font: 29px "Liberation Sans", Arial, sans-serif; fill: #7d312d; stroke: #050505; stroke-width: 1px; }
.axis { font: bold 11px "Liberation Sans", sans-serif; }
.cubetext { font: bold 8px "Liberation Sans", sans-serif; fill: #aaa; }
.browser { position: absolute; left: 4px; top: 4px; width: 300px; }
.panel-head { width: 300px; height: 25px; display: flex; align-items: center; border: 1px solid #c8c8c8; background: #f1f1f1; padding: 0 11px 0 4px; font: 11px Roboto, sans-serif; color: #606060; }
.panel-head span { margin-left: 10px; flex: 1; }
.comments { position: absolute; left: 4px; top: 501px; border-top: 0; padding-left: 14px; letter-spacing: -.35px; }
.tree { list-style: none; margin: 5px 0 0; padding: 0; display: flex; flex-direction: column; gap: 4px; }
.tree li { display: flex; align-items: center; height: 20px; padding-left: 36px; }
.tree li.root { padding-left: 17px; }
.tree li.leaf { padding-left: 72px; }
.tw { margin-right: 8px; }
.tw[width="12"] { margin: 0 8px 0 -1px; }
.tree .root .tw { margin-right: 8px; }
.tw[width="12"] + .w103 { margin-left: -1px; }
.row { height: 20px; display: flex; align-items: center; background: #f1f1f1; padding-left: 3px; white-space: nowrap; }
.row span { flex: 1; padding-right: 9px; text-align: right; }
.row.w130 span { padding-right: 11px; letter-spacing: -.05px; }
.f2 { margin-left: 9px; }
.w148 { width: 148px; gap: 6px; }
.w130 { width: 130px; }
.w110 { width: 110px; }
.w95 { width: 95px; }
.w103 { width: 103px; }
.row.w103 span, .row.w115 span { padding-right: 12px; }
.w99 { width: 99px; }
.w115 { width: 115px; }
.docname { width: 98px; height: 16px; background: #959595; display: flex; align-items: center; justify-content: space-between; padding: 0 9px 0 2px; color: #fff; letter-spacing: .3px; }
.row > .docname + svg { margin-left: -2px; }
.row strong { margin-left: 6px; width: 49px; padding-right: 2px; line-height: 20px; background: #808080; color: #fff; font-weight: normal; text-align: center; }
.cog { color: #858585; }

.navbar { position: absolute; left: 565px; top: 500px; width: 237px; height: 24px; display: flex; align-items: center; padding-left: 3px; background: #f1f1f1; color: #333; }
.c1 { margin-left: 5px; }
.n2 { margin-left: 6px; }
.n3 { margin-left: 10px; }
.n4 { margin-left: 9px; }
.n5 { margin-left: 10px; }
.c2 { margin-left: 4px; }
.n6 { margin-left: 6px; }
.c3 { margin-left: 2px; }
.n7, .n8 { margin-left: 7px; }

.timeline { height: 50px; border-top: 1px solid #d4d4d4; display: flex; padding-left: 11px; }
.play { margin-top: 17px; }
.features { margin: 15px 0 0 23px; }
.ops { display: flex; gap: 8px; }
.bracket { margin: 3px 0 0 8px; }
.marker { margin: 9px 0 0 -2px; }
.settings { margin: 16px 14px 0 auto; color: #606060; }
.taskbar { height: 1px; background: linear-gradient(90deg, #92acc0 240px, #0878e8 240px, #0b2f94 400px, #1463e6 560px, #0a2376 720px, #1363d8 900px, #0b2e85 1085px, #b9c9d4 1085px); }
```
